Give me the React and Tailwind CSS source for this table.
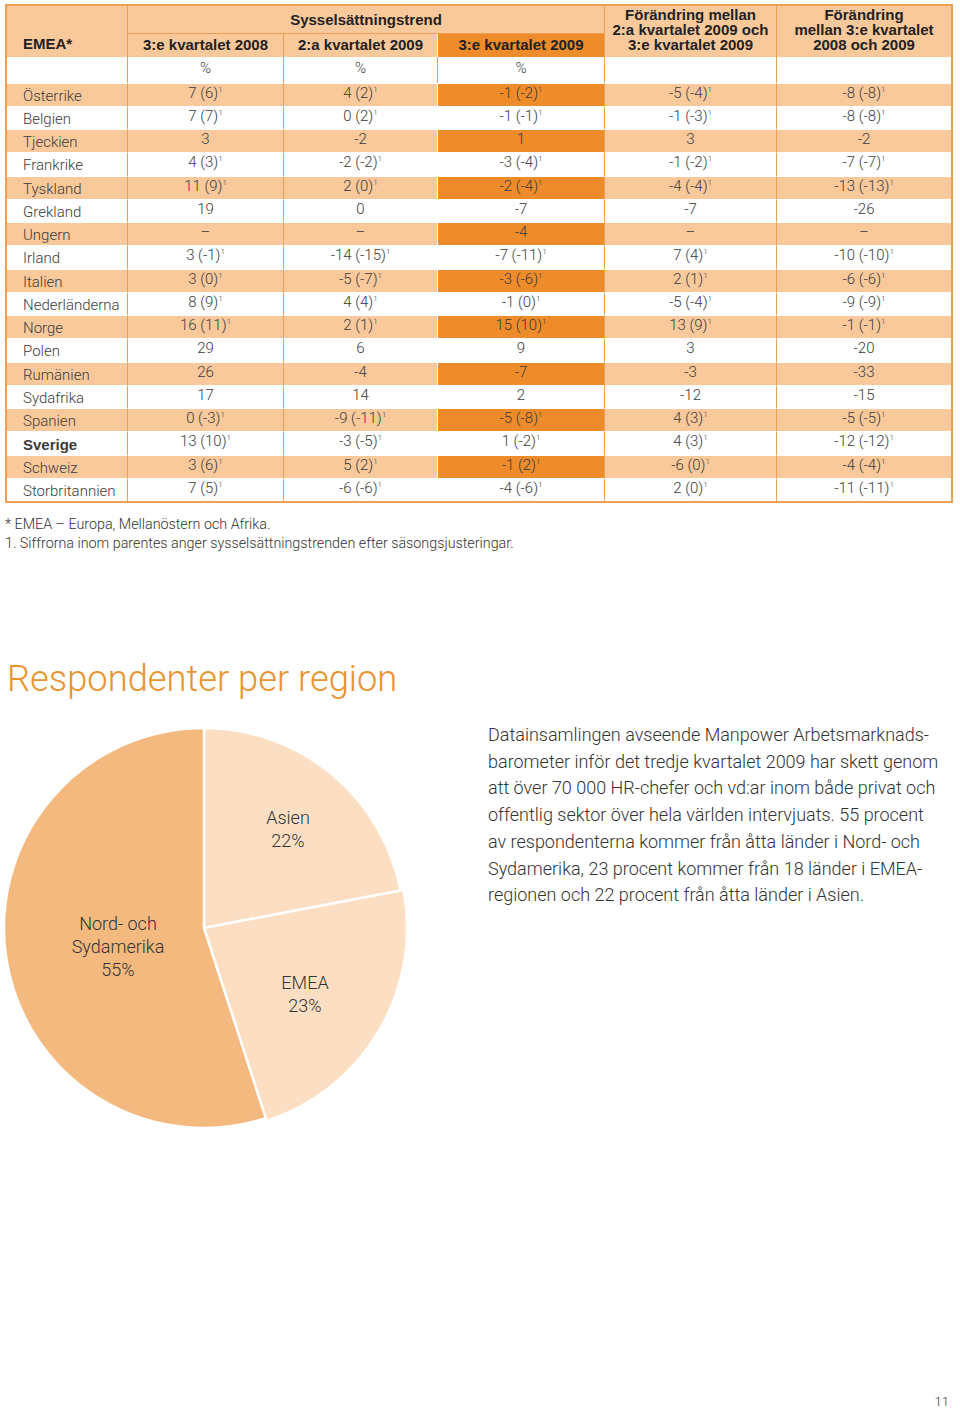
import React from 'react';

const LIGHT = "font-['Roboto',sans-serif] font-light";

const rows = [
  ['Österrike', '7 (6)^', '4 (2)^', '-1 (-2)^', '-5 (-4)^', '-8 (-8)^'],
  ['Belgien', '7 (7)^', '0 (2)^', '-1 (-1)^', '-1 (-3)^', '-8 (-8)^'],
  ['Tjeckien', '3', '-2', '1', '3', '-2'],
  ['Frankrike', '4 (3)^', '-2 (-2)^', '-3 (-4)^', '-1 (-2)^', '-7 (-7)^'],
  ['Tyskland', '11 (9)^', '2 (0)^', '-2 (-4)^', '-4 (-4)^', '-13 (-13)^'],
  ['Grekland', '19', '0', '-7', '-7', '-26'],
  ['Ungern', '–', '–', '-4', '–', '–'],
  ['Irland', '3 (-1)^', '-14 (-15)^', '-7 (-11)^', '7 (4)^', '-10 (-10)^'],
  ['Italien', '3 (0)^', '-5 (-7)^', '-3 (-6)^', '2 (1)^', '-6 (-6)^'],
  ['Nederländerna', '8 (9)^', '4 (4)^', '-1 (0)^', '-5 (-4)^', '-9 (-9)^'],
  ['Norge', '16 (11)^', '2 (1)^', '15 (10)^', '13 (9)^', '-1 (-1)^'],
  ['Polen', '29', '6', '9', '3', '-20'],
  ['Rumänien', '26', '-4', '-7', '-3', '-33'],
  ['Sydafrika', '17', '14', '2', '-12', '-15'],
  ['Spanien', '0 (-3)^', '-9 (-11)^', '-5 (-8)^', '4 (3)^', '-5 (-5)^'],
  ['Sverige', '13 (10)^', '-3 (-5)^', '1 (-2)^', '4 (3)^', '-12 (-12)^'],
  ['Schweiz', '3 (6)^', '5 (2)^', '-1 (2)^', '-6 (0)^', '-4 (-4)^'],
  ['Storbritannien', '7 (5)^', '-6 (-6)^', '-4 (-6)^', '2 (0)^', '-11 (-11)^'],
];

function Value({ v }) {
  if (v.endsWith('^')) {
    return (
      <>
        {v.slice(0, -1)}
        <span className="relative -top-[6px] text-[8px]">1</span>
      </>
    );
  }
  return v;
}

function Table() {
  const cell = 'border-l border-[#eda054]';
  return (
    <div className="ml-[5px] mt-[4px] w-[948px] border-2 border-[#eda054]">
      <table className="w-full table-fixed border-separate border-spacing-0 text-[#3b3b3b]">
        <colgroup>
          <col className="w-[120px]" />
          <col className="w-[156px]" />
          <col className="w-[154px]" />
          <col className="w-[167px]" />
          <col className="w-[172px]" />
          <col />
        </colgroup>
        <thead className="font-['Liberation_Sans',sans-serif] text-[15px] font-bold text-[#222]">
          <tr className="h-[28px]">
            <th rowSpan={2} className="bg-[#f9c99c] pb-[2px] pl-[16px] text-left align-bottom leading-[22px]">
              EMEA*
            </th>
            <th colSpan={3} className={`${cell} border-b bg-[#f9c99c] pt-[1px]`}>
              Sysselsättningstrend
            </th>
            <th rowSpan={2} className={`${cell} bg-[#f9c99c] pt-[1px] align-top leading-[15px]`}>
              Förändring mellan
              <br />
              2:a kvartalet 2009 och
              <br />
              3:e kvartalet 2009
            </th>
            <th rowSpan={2} className={`${cell} bg-[#f9c99c] pt-[1px] align-top leading-[15px]`}>
              Förändring
              <br />
              mellan 3:e kvartalet
              <br />
              2008 och 2009
            </th>
          </tr>
          <tr className="h-[23px]">
            <th className={`${cell} bg-[#f9c99c]`}>3:e kvartalet 2008</th>
            <th className={`${cell} bg-[#f9c99c]`}>2:a kvartalet 2009</th>
            <th className="border-l border-white bg-[#ee8c2c]">3:e kvartalet 2009</th>
          </tr>
        </thead>
        <tbody className={`${LIGHT} text-[15px]`}>
          <tr className="h-[25px]">
            <td className="bg-white" />
            <td className={`${cell} pb-[3px] text-center`}>%</td>
            <td className={`${cell} pb-[3px] text-center`}>%</td>
            <td className={`${cell} pb-[3px] text-center`}>%</td>
            <td className={cell} />
            <td className={cell} />
          </tr>
          {rows.map((r, i) => {
            const shaded = i % 2 === 0;
            const bg = shaded ? 'bg-[#f9c99c]' : 'bg-white';
            return (
              <tr key={r[0]} className="h-[23.25px]">
                <td
                  className={`border-t border-white ${bg} pl-[16px] pt-[3px] leading-none ${
                    r[0] === 'Sverige' ? "font-['Liberation_Sans',sans-serif] font-bold" : ''
                  }`}
                >
                  {r[0]}
                </td>
                {r.slice(1).map((v, j) => (
                  <td
                    key={j}
                    className={`border-t border-t-white border-l ${
                      j === 2 ? 'border-l-white' : 'border-l-[#eda054]'
                    } ${j === 2 && shaded ? 'bg-[#ee8c2c]' : bg} pb-[3px] text-center leading-none`}
                  >
                    <Value v={v} />
                  </td>
                ))}
              </tr>
            );
          })}
        </tbody>
      </table>
    </div>
  );
}

function Pie() {
  return (
    <div className="relative h-[410px] w-[410px] shrink-0">
      <svg width="410" height="410" viewBox="0 720 410 410" className="block">
        <path d="M204 926 L204 726 A200 200 0 0 1 400.5 888.5 Z" fill="#fcdfc3" stroke="#fff" strokeWidth="2.5" />
        <path d="M204 926 L403.5 888 A203 203 0 0 1 266.5 1119 Z" fill="#fcdfc3" stroke="#fff" strokeWidth="2.5" />
        <path d="M204 926 L265.8 1116.2 A200 200 0 1 1 204 726 Z" fill="#f4b97f" stroke="#fff" strokeWidth="2.5" />
      </svg>
      <div className={`${LIGHT} absolute left-[238px] top-[84px] w-[100px] text-center text-[18px] leading-[23px] text-[#333]`}>
        Asien
        <br />
        22%
      </div>
      <div className={`${LIGHT} absolute left-[48px] top-[190px] w-[140px] text-center text-[18px] leading-[23px] text-[#333]`}>
        Nord- och
        <br />
        Sydamerika
        <br />
        55%
      </div>
      <div className={`${LIGHT} absolute left-[255px] top-[249px] w-[100px] text-center text-[18px] leading-[23px] text-[#333]`}>
        EMEA
        <br />
        23%
      </div>
    </div>
  );
}

export default function App() {
  return (
    <div className="relative h-[1410px] w-[960px] overflow-hidden bg-white">
      <Table />

      <div className={`${LIGHT} ml-[5px] mt-[12px] text-[14.3px] leading-[19px] text-[#333]`}>
        <p>* EMEA – Europa, Mellanöstern och Afrika.</p>
        <p>1. Siffrorna inom parentes anger sysselsättningstrenden efter säsongsjusteringar.</p>
      </div>

      <h2 className={`${LIGHT} ml-[7px] mt-[104px] text-[36.3px] leading-[44px] text-[#e9932f]`}>
        Respondenter per region
      </h2>

      <div className="mt-[21px] flex">
        <Pie />
        <p className={`${LIGHT} ml-[78px] w-[470px] text-[18px] leading-[26.7px] text-[#333]`}>
          Datainsamlingen avseende Manpower Arbetsmarknads-
          <br />
          barometer inför det tredje kvartalet 2009 har skett genom
          <br />
          att över 70 000 HR-chefer och vd:ar inom både privat och
          <br />
          offentlig sektor över hela världen intervjuats. 55 procent
          <br />
          av respondenterna kommer från åtta länder i Nord- och
          <br />
          Sydamerika, 23 procent kommer från 18 länder i EMEA-
          <br />
          regionen och 22 procent från åtta länder i Asien.
        </p>
      </div>

      <div className={`${LIGHT} absolute right-[11px] top-[1392px] text-[13px] text-[#333]`}>11</div>
    </div>
  );
}
